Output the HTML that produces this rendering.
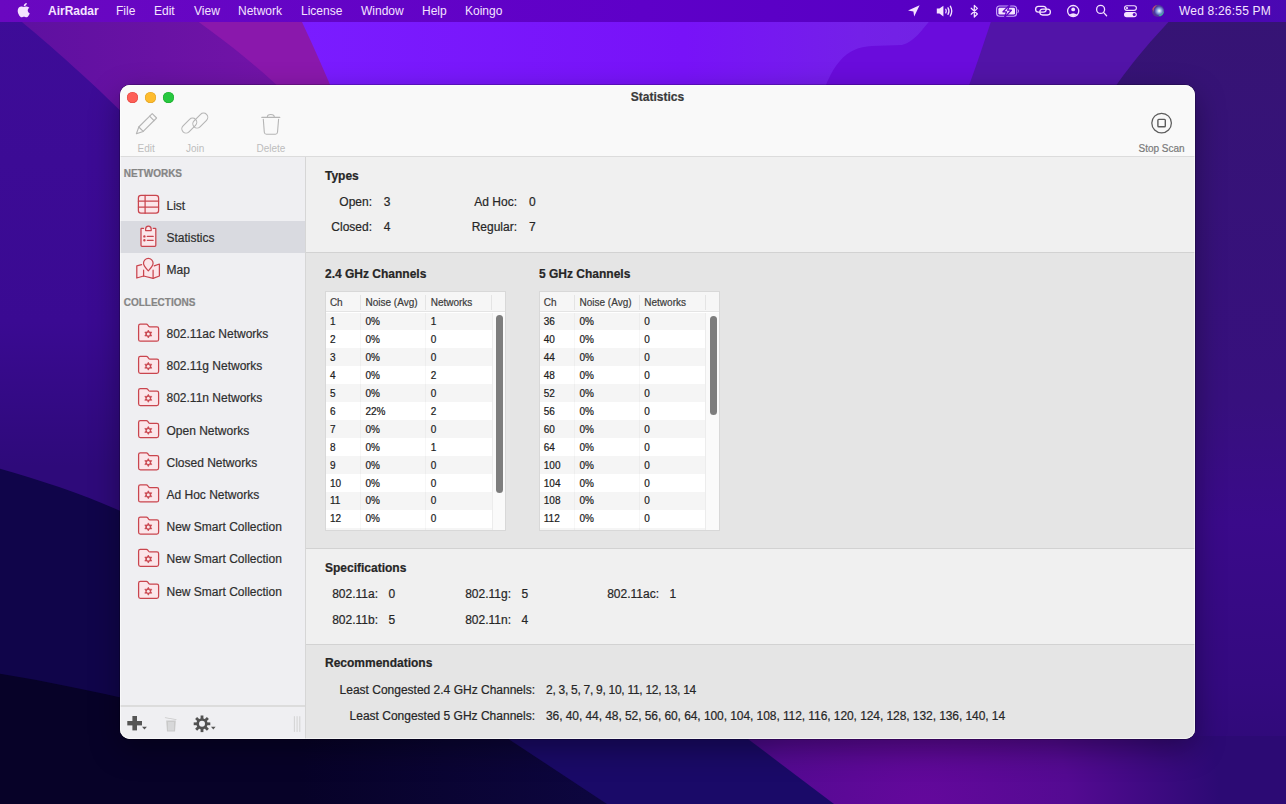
<!DOCTYPE html>
<html><head><meta charset="utf-8">
<style>
*{margin:0;padding:0;box-sizing:border-box}
html,body{width:1286px;height:804px;overflow:hidden;background:#2a0a80;font-family:"Liberation Sans",sans-serif;}
.abs{position:absolute}
#bg{position:absolute;left:0;top:0;width:1286px;height:804px}
#menubar{position:absolute;left:0;top:0;width:1286px;height:22px;background:linear-gradient(to right,#6a08c0 0%,#6404c6 25%,#5e00c8 50%,#5800c4 70%,#5200bc 85%,#4a08b2 100%)}
.mi{position:absolute;top:3.6px;font-size:12px;line-height:14px;color:#f4e4ff;white-space:nowrap}
#win{position:absolute;left:120px;top:85px;width:1075px;height:654px;border-radius:10px;overflow:hidden;background:#f0f0f0;box-shadow:0 0 0 0.5px rgba(0,0,0,0.4),0 10px 30px rgba(0,0,0,0.35)}
#toolbar{position:absolute;left:0;top:0;width:1075px;height:72px;background:#f9f9f9;border-bottom:1px solid #dcdcdc}
#sidebar{position:absolute;left:0;top:72px;width:186px;height:582px;background:#efeff2;border-right:1px solid #d6d6d6}
.t{position:absolute;font-size:12px;line-height:14px;color:#262626;white-space:nowrap;-webkit-text-stroke:0.2px currentColor}
.b{font-weight:bold}
.s10{font-size:10px;line-height:12px}
.sec{position:absolute;left:186px;width:889px}
</style></head><body>
<svg id="bg" width="1286" height="804" viewBox="0 0 1286 804">
 <defs>
  <linearGradient id="gL" x1="0" y1="0" x2="0" y2="804" gradientUnits="userSpaceOnUse"><stop offset="0" stop-color="#3e0c98"/><stop offset="0.4" stop-color="#3a0a92"/><stop offset="0.58" stop-color="#2e0a7a"/></linearGradient>
  <linearGradient id="gM" x1="20" y1="0" x2="300" y2="0" gradientUnits="userSpaceOnUse"><stop offset="0" stop-color="#5e10a0"/><stop offset="1" stop-color="#7414a8"/></linearGradient>
  <linearGradient id="gV" x1="300" y1="0" x2="1000" y2="0" gradientUnits="userSpaceOnUse"><stop offset="0" stop-color="#7a1cff"/><stop offset="0.55" stop-color="#7812f8"/><stop offset="0.8" stop-color="#7420e8"/><stop offset="1" stop-color="#7024e0"/></linearGradient>
  <linearGradient id="gR" x1="0" y1="0" x2="0" y2="804" gradientUnits="userSpaceOnUse"><stop offset="0" stop-color="#361474"/><stop offset="0.5" stop-color="#37107e"/><stop offset="0.65" stop-color="#3a0a8a"/><stop offset="0.85" stop-color="#340a80"/><stop offset="1" stop-color="#2c0a74"/></linearGradient>
  <radialGradient id="gB" cx="920" cy="810" r="300" gradientUnits="userSpaceOnUse"><stop offset="0" stop-color="#64089c"/><stop offset="0.5" stop-color="#540a92"/><stop offset="1" stop-color="#2c0a74"/></radialGradient>
  <linearGradient id="gN" x1="300" y1="0" x2="740" y2="0" gradientUnits="userSpaceOnUse"><stop offset="0" stop-color="#070228"/><stop offset="1" stop-color="#10084a"/></linearGradient>
 </defs>
 <rect width="1286" height="804" fill="url(#gR)"/>
 <!-- left indigo -->
 <rect x="0" y="0" width="140" height="804" fill="url(#gL)"/>
 <!-- magenta wave top-left -->
 <path d="M-5 0 C30 28 75 66 126 116 L420 116 L420 0 Z" fill="url(#gM)"/>
 <path d="M168 0 C205 26 255 62 292 100 L420 100 L420 0 Z" fill="#8a18ac"/>
 <!-- violet -->
 <path d="M292 0 L1000 0 C990 35 975 70 960 110 L340 110 C325 70 310 40 292 0 Z" fill="url(#gV)"/>
 <!-- lighter violet upper -->
 <path d="M818 110 C830 64 846 47 872 46 L902 45 C914 42 922 30 932 18 L944 0 L1000 0 C990 35 975 70 960 110 Z" fill="#6a0cdc"/>
 <!-- medium purple -->
 <path d="M998 0 L1190 0 C1150 40 1125 70 1100 110 L960 110 C975 70 985 40 998 0 Z" fill="#5214a8"/>
 <!-- right lower diagonal -->
 <!-- left lower dark -->
 <path d="M-10 466 C40 480 90 496 140 520 L140 804 L-10 804 Z" fill="#10054a"/>
 <path d="M-10 672 C40 680 90 690 140 702 L140 804 L-10 804 Z" fill="#070228"/>
 <!-- bottom -->
 <path d="M130 736 L1290 736 L1290 810 L130 810 Z" fill="url(#gN)"/>
 <path d="M504 736 L1290 736 L1290 810 L616 810 Z" fill="#1a0a68"/>
 <path d="M744 736 L1290 736 L1290 810 L842 810 Z" fill="url(#gB)"/>
</svg>
<div id="menubar"></div>
<svg class="abs" style="left:0;top:0" width="1286" height="22" viewBox="0 0 1286 22">
 <path transform="translate(17.57 1.98) scale(0.032)" fill="#f4e2ff" d="M318.7 268.7c-.2-36.7 16.4-64.4 50-84.8-18.8-26.9-47.2-41.7-84.7-44.6-35.5-2.8-74.3 20.7-88.5 20.7-15 0-49.4-19.7-76.4-19.7C63.3 141.2 4 184.8 4 273.5q0 39.3 14.4 81.2c12.8 36.7 59 126.7 107.2 125.2 25.2-.6 43-17.9 75.8-17.9 31.8 0 48.3 17.9 76.4 17.9 48.6-.7 90.4-82.5 102.6-119.3-65.2-30.7-61.7-90-61.7-91.9zm-56.6-164.2c27.3-32.4 24.8-61.9 24-72.5-24.1 1.4-52 16.4-67.9 34.9-17.5 19.8-27.8 44.3-25.6 71.9 26.1 2 49.9-11.4 69.5-34.3z"/>
 <path fill="#f4e2ff" d="M919.6 5.2 L908 10.6 L913.4 11.4 L914.2 16.6 Z"/>
 <path fill="#f4e2ff" d="M936.8 8.6 L939.4 8.6 L943.4 5.8 L943.4 16.4 L939.4 13.6 L936.8 13.6 Z"/>
 <g fill="none" stroke="#f4e2ff" stroke-width="1.3" stroke-linecap="round">
  <path d="M945.8 9.3 Q946.8 11.1 945.8 12.9"/>
  <path d="M948 7.8 Q950 11.1 948 14.4"/>
  <path d="M950.3 6.2 Q953.2 11.1 950.3 16"/>
  <path d="M971.2 8.2 L977.4 14 L974.3 17 L974.3 5.4 L977.4 8.4 L971.2 14.2" stroke-width="1.2" stroke-linejoin="round"/>
 </g>
 <rect x="996.6" y="6" width="20" height="10.2" rx="3" fill="none" stroke="#c8a8f8" stroke-width="1.1"/>
 <rect x="998.4" y="7.8" width="16.6" height="6.8" rx="1.4" fill="#f4e2ff"/>
 <path d="M1017.9 9.4 Q1019.2 11.1 1017.9 12.8" fill="none" stroke="#c8a8f8" stroke-width="1"/>
 <path d="M1010 4.6 L1003 11.8 L1006.6 11.8 L1004.4 17.6 L1011.4 10.2 L1007.6 10.2 Z" fill="#f4e2ff" stroke="#5e04c6" stroke-width="1.3" stroke-linejoin="round"/>
 <g fill="none" stroke="#f4e2ff" stroke-width="1.3">
  <rect x="1035.6" y="6.4" width="10.6" height="5.8" rx="2.9"/>
  <rect x="1039.8" y="9.2" width="10.6" height="5.8" rx="2.9"/>
  <circle cx="1073.2" cy="11.1" r="5.6"/>
  <circle cx="1100.6" cy="9.4" r="4"/>
  <path d="M1103.5 12.4 L1106.6 15.8" stroke-linecap="round"/>
  <rect x="1124.6" y="5.8" width="11.8" height="4.6" rx="2.3" stroke-width="1.1"/>
 </g>
 <circle cx="1073.2" cy="9.4" r="1.9" fill="#f4e2ff"/>
 <path d="M1069.2 14.8 Q1073.2 11.6 1077.2 14.8 Q1073.2 17.6 1069.2 14.8 Z" fill="#f4e2ff"/>
 <circle cx="1127" cy="8.1" r="1.1" fill="#f4e2ff"/>
 <rect x="1124" y="12" width="12.8" height="5.2" rx="2.6" fill="#f4e2ff"/>
 <circle cx="1134.2" cy="14.6" r="1.5" fill="#5a06c0"/>
 <defs><radialGradient id="siri" cx="0.6" cy="0.5" r="0.6"><stop offset="0" stop-color="#ffffff"/><stop offset="0.3" stop-color="#90b0e8"/><stop offset="0.65" stop-color="#4a3aa0"/><stop offset="1" stop-color="#5a2a8a"/></radialGradient></defs>
 <circle cx="1158" cy="10.9" r="6.2" fill="url(#siri)"/>
 <path d="M1152.4 9 Q1154 5.5 1157 5.2 Q1153 8 1153.5 12 Z" fill="#e0506a" opacity="0.8"/>
 <path d="M1160 16.5 Q1163.8 15 1164 11 Q1162 14.5 1158.5 15 Z" fill="#40c0a0" opacity="0.8"/>
</svg>

<div class="mi b" style="left:48px">AirRadar</div>
<div class="mi" style="left:116px">File</div>
<div class="mi" style="left:154px">Edit</div>
<div class="mi" style="left:194px">View</div>
<div class="mi" style="left:238px">Network</div>
<div class="mi" style="left:301px">License</div>
<div class="mi" style="left:361px">Window</div>
<div class="mi" style="left:422px">Help</div>
<div class="mi" style="left:465px">Koingo</div>
<div class="mi" style="left:1179px;letter-spacing:0.2px">Wed 8:26:55 PM</div>

<div id="win">
 <div id="toolbar"></div>
 <div id="sidebar"></div>
 <div class="abs" style="left:0;top:620px;width:185px;height:1.5px;background:#dcdcdc"></div>
 <div class="sec" style="top:72px;height:96px;background:#f0f0f0;border-bottom:1px solid #d2d2d2"></div>
 <div class="sec" style="top:168px;height:296px;background:#e5e5e5;border-bottom:1px solid #d2d2d2"></div>
 <div class="sec" style="top:464px;height:96px;background:#f0f0f0;border-bottom:1px solid #d2d2d2"></div>
 <div class="sec" style="top:560px;height:95px;background:#e5e5e5"></div>
 <!-- traffic lights -->
 <div class="abs" style="left:7px;top:6.9px;width:11px;height:11px;border-radius:50%;background:#fe5f57;box-shadow:inset 0 0 0 0.5px #e0443e"></div>
 <div class="abs" style="left:24.9px;top:6.9px;width:11px;height:11px;border-radius:50%;background:#febc2e;box-shadow:inset 0 0 0 0.5px #dea123"></div>
 <div class="abs" style="left:42.5px;top:6.9px;width:11px;height:11px;border-radius:50%;background:#28c840;box-shadow:inset 0 0 0 0.5px #1aab29"></div>
 <div class="t b" style="left:0;width:1075px;text-align:center;top:5px;color:#3a3a3a">Statistics</div>
<div class="t s10" style="left:17.6px;top:57.6px;color:#bdbdbd;-webkit-text-stroke:0">Edit</div>
<div class="t s10" style="left:66.0px;top:57.6px;color:#bdbdbd;-webkit-text-stroke:0">Join</div>
<div class="t s10" style="left:136.5px;top:57.6px;color:#bdbdbd;-webkit-text-stroke:0">Delete</div>
<div class="t s10" style="left:1018.5px;top:57.9px;color:#7a7a7a">Stop Scan</div>
<div class="abs" style="left:0;top:136px;width:185px;height:32px;background:#d9dae0"></div>
<div class="t b s10" style="left:3.7px;top:82.7px;color:#858585">NETWORKS</div>
<div class="t b s10" style="left:3.7px;top:211.5px;color:#858585">COLLECTIONS</div>
<div class="t " style="left:46.5px;top:113.7px;color:#2e2e2e">List</div>
<div class="t " style="left:46.5px;top:145.7px;color:#2e2e2e">Statistics</div>
<div class="t " style="left:46.5px;top:177.7px;color:#2e2e2e">Map</div>
<div class="t " style="left:46.5px;top:242.0px;color:#2e2e2e">802.11ac Networks</div>
<div class="t " style="left:46.5px;top:274.2px;color:#2e2e2e">802.11g Networks</div>
<div class="t " style="left:46.5px;top:306.3px;color:#2e2e2e">802.11n Networks</div>
<div class="t " style="left:46.5px;top:338.5px;color:#2e2e2e">Open Networks</div>
<div class="t " style="left:46.5px;top:370.6px;color:#2e2e2e">Closed Networks</div>
<div class="t " style="left:46.5px;top:402.8px;color:#2e2e2e">Ad Hoc Networks</div>
<div class="t " style="left:46.5px;top:434.9px;color:#2e2e2e">New Smart Collection</div>
<div class="t " style="left:46.5px;top:467.1px;color:#2e2e2e">New Smart Collection</div>
<div class="t " style="left:46.5px;top:500.2px;color:#2e2e2e">New Smart Collection</div>
<div class="t b" style="left:205.0px;top:83.5px;">Types</div>
<div class="t" style="left:52.0px;width:200px;text-align:right;top:109.5px;">Open:</div>
<div class="t " style="left:263.8px;top:109.5px;">3</div>
<div class="t" style="left:52.0px;width:200px;text-align:right;top:135.0px;">Closed:</div>
<div class="t " style="left:263.8px;top:135.0px;">4</div>
<div class="t" style="left:197.0px;width:200px;text-align:right;top:109.5px;">Ad Hoc:</div>
<div class="t " style="left:409.0px;top:109.5px;">0</div>
<div class="t" style="left:197.0px;width:200px;text-align:right;top:135.0px;">Regular:</div>
<div class="t " style="left:409.0px;top:135.0px;">7</div>
<div class="t b" style="left:205.0px;top:181.6px;">2.4 GHz Channels</div>
<div class="t b" style="left:419.0px;top:181.6px;">5 GHz Channels</div>
<div class="t b" style="left:205.0px;top:476.3px;">Specifications</div>
<div class="t" style="left:58.0px;width:200px;text-align:right;top:502.3px;">802.11a:</div>
<div class="t " style="left:268.5px;top:502.3px;">0</div>
<div class="t" style="left:58.0px;width:200px;text-align:right;top:528.3px;">802.11b:</div>
<div class="t " style="left:268.5px;top:528.3px;">5</div>
<div class="t" style="left:191.0px;width:200px;text-align:right;top:502.3px;">802.11g:</div>
<div class="t " style="left:401.5px;top:502.3px;">5</div>
<div class="t" style="left:191.0px;width:200px;text-align:right;top:528.3px;">802.11n:</div>
<div class="t " style="left:401.5px;top:528.3px;">4</div>
<div class="t" style="left:339.0px;width:200px;text-align:right;top:502.3px;">802.11ac:</div>
<div class="t " style="left:549.5px;top:502.3px;">1</div>
<div class="t b" style="left:205.0px;top:571.3px;">Recommendations</div>
<div class="t" style="left:215.0px;width:200px;text-align:right;top:598.0px;">Least Congested 2.4 GHz Channels:</div>
<div class="t " style="left:426.0px;top:598.0px;;letter-spacing:-0.28px">2, 3, 5, 7, 9, 10, 11, 12, 13, 14</div>
<div class="t" style="left:215.0px;width:200px;text-align:right;top:624.0px;">Least Congested 5 GHz Channels:</div>
<div class="t " style="left:426.0px;top:624.0px;letter-spacing:-0.07px">36, 40, 44, 48, 52, 56, 60, 64, 100, 104, 108, 112, 116, 120, 124, 128, 132, 136, 140, 14</div>
<div class="abs" style="left:205.5px;top:206.5px;width:179.5px;height:238px;background:#fff;box-shadow:0 0 0 1px #d8d8d8;overflow:hidden"><div class="abs" style="left:0;top:0;width:179.5px;height:20.5px;background:#f6f6f6;border-bottom:1px solid #e4e4e4"></div><div class="abs" style="left:34.7px;top:3px;width:1px;height:15px;background:#e4e4e4"></div><div class="abs" style="left:99.6px;top:3px;width:1px;height:15px;background:#e4e4e4"></div><div class="abs" style="left:165.9px;top:3px;width:1px;height:15px;background:#e4e4e4"></div><div class="t s10" style="left:4.4px;top:5.3px;color:#3c3c3c">Ch</div><div class="t s10" style="left:40.0px;top:5.3px;color:#3c3c3c">Noise (Avg)</div><div class="t s10" style="left:105.2px;top:5.3px;color:#3c3c3c">Networks</div><div class="abs" style="left:0;top:21.00px;width:166.4px;height:17.94px;background:#f5f5f5"></div><div class="abs" style="left:34.7px;top:21.00px;width:1px;height:17.94px;background:rgba(0,0,0,0.03)"></div><div class="abs" style="left:99.6px;top:21.00px;width:1px;height:17.94px;background:rgba(0,0,0,0.03)"></div><div class="t s10" style="left:4.4px;top:24.5px;color:#202020">1</div><div class="t s10" style="left:40.0px;top:24.5px;color:#202020">0%</div><div class="t s10" style="left:105.2px;top:24.5px;color:#202020">1</div><div class="abs" style="left:0;top:38.94px;width:166.4px;height:17.94px;background:#ffffff"></div><div class="abs" style="left:34.7px;top:38.94px;width:1px;height:17.94px;background:rgba(0,0,0,0.03)"></div><div class="abs" style="left:99.6px;top:38.94px;width:1px;height:17.94px;background:rgba(0,0,0,0.03)"></div><div class="t s10" style="left:4.4px;top:42.5px;color:#202020">2</div><div class="t s10" style="left:40.0px;top:42.5px;color:#202020">0%</div><div class="t s10" style="left:105.2px;top:42.5px;color:#202020">0</div><div class="abs" style="left:0;top:56.88px;width:166.4px;height:17.94px;background:#f5f5f5"></div><div class="abs" style="left:34.7px;top:56.88px;width:1px;height:17.94px;background:rgba(0,0,0,0.03)"></div><div class="abs" style="left:99.6px;top:56.88px;width:1px;height:17.94px;background:rgba(0,0,0,0.03)"></div><div class="t s10" style="left:4.4px;top:60.4px;color:#202020">3</div><div class="t s10" style="left:40.0px;top:60.4px;color:#202020">0%</div><div class="t s10" style="left:105.2px;top:60.4px;color:#202020">0</div><div class="abs" style="left:0;top:74.82px;width:166.4px;height:17.94px;background:#ffffff"></div><div class="abs" style="left:34.7px;top:74.82px;width:1px;height:17.94px;background:rgba(0,0,0,0.03)"></div><div class="abs" style="left:99.6px;top:74.82px;width:1px;height:17.94px;background:rgba(0,0,0,0.03)"></div><div class="t s10" style="left:4.4px;top:78.4px;color:#202020">4</div><div class="t s10" style="left:40.0px;top:78.4px;color:#202020">0%</div><div class="t s10" style="left:105.2px;top:78.4px;color:#202020">2</div><div class="abs" style="left:0;top:92.76px;width:166.4px;height:17.94px;background:#f5f5f5"></div><div class="abs" style="left:34.7px;top:92.76px;width:1px;height:17.94px;background:rgba(0,0,0,0.03)"></div><div class="abs" style="left:99.6px;top:92.76px;width:1px;height:17.94px;background:rgba(0,0,0,0.03)"></div><div class="t s10" style="left:4.4px;top:96.3px;color:#202020">5</div><div class="t s10" style="left:40.0px;top:96.3px;color:#202020">0%</div><div class="t s10" style="left:105.2px;top:96.3px;color:#202020">0</div><div class="abs" style="left:0;top:110.70px;width:166.4px;height:17.94px;background:#ffffff"></div><div class="abs" style="left:34.7px;top:110.70px;width:1px;height:17.94px;background:rgba(0,0,0,0.03)"></div><div class="abs" style="left:99.6px;top:110.70px;width:1px;height:17.94px;background:rgba(0,0,0,0.03)"></div><div class="t s10" style="left:4.4px;top:114.2px;color:#202020">6</div><div class="t s10" style="left:40.0px;top:114.2px;color:#202020">22%</div><div class="t s10" style="left:105.2px;top:114.2px;color:#202020">2</div><div class="abs" style="left:0;top:128.64px;width:166.4px;height:17.94px;background:#f5f5f5"></div><div class="abs" style="left:34.7px;top:128.64px;width:1px;height:17.94px;background:rgba(0,0,0,0.03)"></div><div class="abs" style="left:99.6px;top:128.64px;width:1px;height:17.94px;background:rgba(0,0,0,0.03)"></div><div class="t s10" style="left:4.4px;top:132.2px;color:#202020">7</div><div class="t s10" style="left:40.0px;top:132.2px;color:#202020">0%</div><div class="t s10" style="left:105.2px;top:132.2px;color:#202020">0</div><div class="abs" style="left:0;top:146.58px;width:166.4px;height:17.94px;background:#ffffff"></div><div class="abs" style="left:34.7px;top:146.58px;width:1px;height:17.94px;background:rgba(0,0,0,0.03)"></div><div class="abs" style="left:99.6px;top:146.58px;width:1px;height:17.94px;background:rgba(0,0,0,0.03)"></div><div class="t s10" style="left:4.4px;top:150.1px;color:#202020">8</div><div class="t s10" style="left:40.0px;top:150.1px;color:#202020">0%</div><div class="t s10" style="left:105.2px;top:150.1px;color:#202020">1</div><div class="abs" style="left:0;top:164.52px;width:166.4px;height:17.94px;background:#f5f5f5"></div><div class="abs" style="left:34.7px;top:164.52px;width:1px;height:17.94px;background:rgba(0,0,0,0.03)"></div><div class="abs" style="left:99.6px;top:164.52px;width:1px;height:17.94px;background:rgba(0,0,0,0.03)"></div><div class="t s10" style="left:4.4px;top:168.1px;color:#202020">9</div><div class="t s10" style="left:40.0px;top:168.1px;color:#202020">0%</div><div class="t s10" style="left:105.2px;top:168.1px;color:#202020">0</div><div class="abs" style="left:0;top:182.46px;width:166.4px;height:17.94px;background:#ffffff"></div><div class="abs" style="left:34.7px;top:182.46px;width:1px;height:17.94px;background:rgba(0,0,0,0.03)"></div><div class="abs" style="left:99.6px;top:182.46px;width:1px;height:17.94px;background:rgba(0,0,0,0.03)"></div><div class="t s10" style="left:4.4px;top:186.0px;color:#202020">10</div><div class="t s10" style="left:40.0px;top:186.0px;color:#202020">0%</div><div class="t s10" style="left:105.2px;top:186.0px;color:#202020">0</div><div class="abs" style="left:0;top:200.40px;width:166.4px;height:17.94px;background:#f5f5f5"></div><div class="abs" style="left:34.7px;top:200.40px;width:1px;height:17.94px;background:rgba(0,0,0,0.03)"></div><div class="abs" style="left:99.6px;top:200.40px;width:1px;height:17.94px;background:rgba(0,0,0,0.03)"></div><div class="t s10" style="left:4.4px;top:203.9px;color:#202020">11</div><div class="t s10" style="left:40.0px;top:203.9px;color:#202020">0%</div><div class="t s10" style="left:105.2px;top:203.9px;color:#202020">0</div><div class="abs" style="left:0;top:218.34px;width:166.4px;height:17.94px;background:#ffffff"></div><div class="abs" style="left:34.7px;top:218.34px;width:1px;height:17.94px;background:rgba(0,0,0,0.03)"></div><div class="abs" style="left:99.6px;top:218.34px;width:1px;height:17.94px;background:rgba(0,0,0,0.03)"></div><div class="t s10" style="left:4.4px;top:221.9px;color:#202020">12</div><div class="t s10" style="left:40.0px;top:221.9px;color:#202020">0%</div><div class="t s10" style="left:105.2px;top:221.9px;color:#202020">0</div><div class="abs" style="left:0;top:236.28px;width:166.4px;height:17.94px;background:#f5f5f5"></div><div class="abs" style="left:34.7px;top:236.28px;width:1px;height:17.94px;background:rgba(0,0,0,0.03)"></div><div class="abs" style="left:99.6px;top:236.28px;width:1px;height:17.94px;background:rgba(0,0,0,0.03)"></div><div class="t s10" style="left:4.4px;top:239.8px;color:#202020">13</div><div class="t s10" style="left:40.0px;top:239.8px;color:#202020">0%</div><div class="t s10" style="left:105.2px;top:239.8px;color:#202020">0</div><div class="abs" style="left:166.4px;top:21.0px;width:13.6px;height:220px;background:#fafafa;border-left:1px solid #ececec"></div><div class="abs" style="left:170.5px;top:23.8px;width:7.2px;height:177.7px;border-radius:4px;background:#7d7d7d"></div></div>
<div class="abs" style="left:420.3px;top:206.5px;width:179.2px;height:238px;background:#fff;box-shadow:0 0 0 1px #d8d8d8;overflow:hidden"><div class="abs" style="left:0;top:0;width:179.2px;height:20.5px;background:#f6f6f6;border-bottom:1px solid #e4e4e4"></div><div class="abs" style="left:34.0px;top:3px;width:1px;height:15px;background:#e4e4e4"></div><div class="abs" style="left:98.7px;top:3px;width:1px;height:15px;background:#e4e4e4"></div><div class="abs" style="left:164.7px;top:3px;width:1px;height:15px;background:#e4e4e4"></div><div class="t s10" style="left:3.5px;top:5.3px;color:#3c3c3c">Ch</div><div class="t s10" style="left:39.2px;top:5.3px;color:#3c3c3c">Noise (Avg)</div><div class="t s10" style="left:104.0px;top:5.3px;color:#3c3c3c">Networks</div><div class="abs" style="left:0;top:21.00px;width:165.2px;height:17.94px;background:#f5f5f5"></div><div class="abs" style="left:34.0px;top:21.00px;width:1px;height:17.94px;background:rgba(0,0,0,0.03)"></div><div class="abs" style="left:98.7px;top:21.00px;width:1px;height:17.94px;background:rgba(0,0,0,0.03)"></div><div class="t s10" style="left:3.5px;top:24.5px;color:#202020">36</div><div class="t s10" style="left:39.2px;top:24.5px;color:#202020">0%</div><div class="t s10" style="left:104.0px;top:24.5px;color:#202020">0</div><div class="abs" style="left:0;top:38.94px;width:165.2px;height:17.94px;background:#ffffff"></div><div class="abs" style="left:34.0px;top:38.94px;width:1px;height:17.94px;background:rgba(0,0,0,0.03)"></div><div class="abs" style="left:98.7px;top:38.94px;width:1px;height:17.94px;background:rgba(0,0,0,0.03)"></div><div class="t s10" style="left:3.5px;top:42.5px;color:#202020">40</div><div class="t s10" style="left:39.2px;top:42.5px;color:#202020">0%</div><div class="t s10" style="left:104.0px;top:42.5px;color:#202020">0</div><div class="abs" style="left:0;top:56.88px;width:165.2px;height:17.94px;background:#f5f5f5"></div><div class="abs" style="left:34.0px;top:56.88px;width:1px;height:17.94px;background:rgba(0,0,0,0.03)"></div><div class="abs" style="left:98.7px;top:56.88px;width:1px;height:17.94px;background:rgba(0,0,0,0.03)"></div><div class="t s10" style="left:3.5px;top:60.4px;color:#202020">44</div><div class="t s10" style="left:39.2px;top:60.4px;color:#202020">0%</div><div class="t s10" style="left:104.0px;top:60.4px;color:#202020">0</div><div class="abs" style="left:0;top:74.82px;width:165.2px;height:17.94px;background:#ffffff"></div><div class="abs" style="left:34.0px;top:74.82px;width:1px;height:17.94px;background:rgba(0,0,0,0.03)"></div><div class="abs" style="left:98.7px;top:74.82px;width:1px;height:17.94px;background:rgba(0,0,0,0.03)"></div><div class="t s10" style="left:3.5px;top:78.4px;color:#202020">48</div><div class="t s10" style="left:39.2px;top:78.4px;color:#202020">0%</div><div class="t s10" style="left:104.0px;top:78.4px;color:#202020">0</div><div class="abs" style="left:0;top:92.76px;width:165.2px;height:17.94px;background:#f5f5f5"></div><div class="abs" style="left:34.0px;top:92.76px;width:1px;height:17.94px;background:rgba(0,0,0,0.03)"></div><div class="abs" style="left:98.7px;top:92.76px;width:1px;height:17.94px;background:rgba(0,0,0,0.03)"></div><div class="t s10" style="left:3.5px;top:96.3px;color:#202020">52</div><div class="t s10" style="left:39.2px;top:96.3px;color:#202020">0%</div><div class="t s10" style="left:104.0px;top:96.3px;color:#202020">0</div><div class="abs" style="left:0;top:110.70px;width:165.2px;height:17.94px;background:#ffffff"></div><div class="abs" style="left:34.0px;top:110.70px;width:1px;height:17.94px;background:rgba(0,0,0,0.03)"></div><div class="abs" style="left:98.7px;top:110.70px;width:1px;height:17.94px;background:rgba(0,0,0,0.03)"></div><div class="t s10" style="left:3.5px;top:114.2px;color:#202020">56</div><div class="t s10" style="left:39.2px;top:114.2px;color:#202020">0%</div><div class="t s10" style="left:104.0px;top:114.2px;color:#202020">0</div><div class="abs" style="left:0;top:128.64px;width:165.2px;height:17.94px;background:#f5f5f5"></div><div class="abs" style="left:34.0px;top:128.64px;width:1px;height:17.94px;background:rgba(0,0,0,0.03)"></div><div class="abs" style="left:98.7px;top:128.64px;width:1px;height:17.94px;background:rgba(0,0,0,0.03)"></div><div class="t s10" style="left:3.5px;top:132.2px;color:#202020">60</div><div class="t s10" style="left:39.2px;top:132.2px;color:#202020">0%</div><div class="t s10" style="left:104.0px;top:132.2px;color:#202020">0</div><div class="abs" style="left:0;top:146.58px;width:165.2px;height:17.94px;background:#ffffff"></div><div class="abs" style="left:34.0px;top:146.58px;width:1px;height:17.94px;background:rgba(0,0,0,0.03)"></div><div class="abs" style="left:98.7px;top:146.58px;width:1px;height:17.94px;background:rgba(0,0,0,0.03)"></div><div class="t s10" style="left:3.5px;top:150.1px;color:#202020">64</div><div class="t s10" style="left:39.2px;top:150.1px;color:#202020">0%</div><div class="t s10" style="left:104.0px;top:150.1px;color:#202020">0</div><div class="abs" style="left:0;top:164.52px;width:165.2px;height:17.94px;background:#f5f5f5"></div><div class="abs" style="left:34.0px;top:164.52px;width:1px;height:17.94px;background:rgba(0,0,0,0.03)"></div><div class="abs" style="left:98.7px;top:164.52px;width:1px;height:17.94px;background:rgba(0,0,0,0.03)"></div><div class="t s10" style="left:3.5px;top:168.1px;color:#202020">100</div><div class="t s10" style="left:39.2px;top:168.1px;color:#202020">0%</div><div class="t s10" style="left:104.0px;top:168.1px;color:#202020">0</div><div class="abs" style="left:0;top:182.46px;width:165.2px;height:17.94px;background:#ffffff"></div><div class="abs" style="left:34.0px;top:182.46px;width:1px;height:17.94px;background:rgba(0,0,0,0.03)"></div><div class="abs" style="left:98.7px;top:182.46px;width:1px;height:17.94px;background:rgba(0,0,0,0.03)"></div><div class="t s10" style="left:3.5px;top:186.0px;color:#202020">104</div><div class="t s10" style="left:39.2px;top:186.0px;color:#202020">0%</div><div class="t s10" style="left:104.0px;top:186.0px;color:#202020">0</div><div class="abs" style="left:0;top:200.40px;width:165.2px;height:17.94px;background:#f5f5f5"></div><div class="abs" style="left:34.0px;top:200.40px;width:1px;height:17.94px;background:rgba(0,0,0,0.03)"></div><div class="abs" style="left:98.7px;top:200.40px;width:1px;height:17.94px;background:rgba(0,0,0,0.03)"></div><div class="t s10" style="left:3.5px;top:203.9px;color:#202020">108</div><div class="t s10" style="left:39.2px;top:203.9px;color:#202020">0%</div><div class="t s10" style="left:104.0px;top:203.9px;color:#202020">0</div><div class="abs" style="left:0;top:218.34px;width:165.2px;height:17.94px;background:#ffffff"></div><div class="abs" style="left:34.0px;top:218.34px;width:1px;height:17.94px;background:rgba(0,0,0,0.03)"></div><div class="abs" style="left:98.7px;top:218.34px;width:1px;height:17.94px;background:rgba(0,0,0,0.03)"></div><div class="t s10" style="left:3.5px;top:221.9px;color:#202020">112</div><div class="t s10" style="left:39.2px;top:221.9px;color:#202020">0%</div><div class="t s10" style="left:104.0px;top:221.9px;color:#202020">0</div><div class="abs" style="left:0;top:236.28px;width:165.2px;height:17.94px;background:#f5f5f5"></div><div class="abs" style="left:34.0px;top:236.28px;width:1px;height:17.94px;background:rgba(0,0,0,0.03)"></div><div class="abs" style="left:98.7px;top:236.28px;width:1px;height:17.94px;background:rgba(0,0,0,0.03)"></div><div class="t s10" style="left:3.5px;top:239.8px;color:#202020">116</div><div class="t s10" style="left:39.2px;top:239.8px;color:#202020">0%</div><div class="t s10" style="left:104.0px;top:239.8px;color:#202020">0</div><div class="abs" style="left:165.2px;top:21.0px;width:14.5px;height:220px;background:#fafafa;border-left:1px solid #ececec"></div><div class="abs" style="left:169.9px;top:24.0px;width:6.6px;height:99.2px;border-radius:4px;background:#7d7d7d"></div></div>
</div>
<svg class="abs" style="left:0;top:0" width="1286" height="804" viewBox="0 0 1286 804">
<g fill="none" stroke="#b5b5b5" stroke-width="1.1" stroke-linejoin="round" stroke-linecap="round">
 <!-- pencil -->
 <path d="M152.2 113.6 L156.6 118.0 L143.2 131.4 L136.4 133.8 L138.8 127.0 Z"/>
 <path d="M149.6 116.2 L154.0 120.6"/>
 <path d="M138.8 127.0 L143.2 131.4"/>
 <!-- link -->
 <g transform="translate(189.3 125.6) rotate(-45)"><rect x="-8.8" y="-4.2" width="17.6" height="8.4" rx="4.2"/></g>
 <g transform="translate(200.3 120.6) rotate(-45)"><rect x="-8.8" y="-4.2" width="17.6" height="8.4" rx="4.2"/></g>
 <!-- trash -->
 <path d="M261.8 117.4 L279.8 117.4"/>
 <path d="M267.3 117.2 C267.3 113.6 274.3 113.6 274.3 117.2"/>
 <path d="M263.3 119.2 L264.3 132.3 Q264.5 134.3 266.5 134.3 L275.3 134.3 Q277.3 134.3 277.5 132.3 L278.6 119.2"/>
</g>
<!-- stop scan -->
<circle cx="1161.6" cy="123.1" r="9.8" fill="none" stroke="#5c5c5c" stroke-width="1.25"/>
<rect x="1157.9" y="119.4" width="7.4" height="7.4" rx="0.8" fill="none" stroke="#5c5c5c" stroke-width="1.4"/>
<g fill="#fbe6ea" stroke="#c9454e" stroke-width="1.25" stroke-linejoin="round" stroke-linecap="round">
 <!-- list -->
 <rect x="138.4" y="195.4" width="20.2" height="17.8" rx="2.6"/>
 <path d="M138.4 201.2 H158.6 M138.4 207 H158.6 M145.1 195.4 V213.2" fill="none"/>
 <!-- clipboard -->
 <path d="M143.5 228.4 L141.5 228.4 Q141 228.4 141 229 L141 245.3 Q141 246.3 142 246.3 L154.8 246.3 Q155.8 246.3 155.8 245.3 L155.8 229 Q155.8 228.4 155.3 228.4 L153.3 228.4"/>
 <path d="M145.6 230.6 L145.6 229.3 Q145.6 226.1 148.4 226.1 Q151.2 226.1 151.2 229.3 L151.2 230.6 Z" />
 <path d="M147.3 236.4 H153.2 M147.3 240.3 H153.2" fill="none"/>
 <circle cx="144.4" cy="236.4" r="0.6" fill="#c9454e"/>
 <circle cx="144.4" cy="240.3" r="0.6" fill="#c9454e"/>
 <!-- map -->
 <path d="M141.6 264.6 L136.8 265.8 L136.8 278 L143.6 276 L153.1 278.3 L159.4 276 L159.4 264 L154.2 265.8" />
 <path d="M143.6 270.2 V276 M153.1 270.2 V278.3" fill="none"/>
 <path d="M148.3 270.8 C146.2 268.6 143.5 266 143.5 263.3 A4.8 4.8 0 0 1 153.1 263.3 C153.1 266 150.4 268.6 148.3 270.8 Z"/>
</g>
<g transform="translate(0 0.00)" stroke="#c9454e" stroke-width="1.25" stroke-linejoin="round">
 <path d="M138.6 326 Q138.6 324.2 140.4 324.2 L146.4 324.2 Q147.2 324.2 147.8 325 L148.6 326.2 Q149.1 326.9 150 326.9 L157 326.9 Q158.6 326.9 158.6 328.5 L158.6 339.4 Q158.6 341.2 156.8 341.2 L140.4 341.2 Q138.6 341.2 138.6 339.4 Z" fill="#fbe6ea"/>
 <path d="M148.3 330 L149.5 332 L151.8 332 L150.7 334 L151.8 336 L149.5 336 L148.3 338 L147.1 336 L144.8 336 L145.9 334 L144.8 332 L147.1 332 Z" fill="#c9454e" stroke-width="0.6"/>
 <circle cx="148.3" cy="334" r="1.5" fill="#fbe6ea" stroke="none"/>
</g>
<g transform="translate(0 32.15)" stroke="#c9454e" stroke-width="1.25" stroke-linejoin="round">
 <path d="M138.6 326 Q138.6 324.2 140.4 324.2 L146.4 324.2 Q147.2 324.2 147.8 325 L148.6 326.2 Q149.1 326.9 150 326.9 L157 326.9 Q158.6 326.9 158.6 328.5 L158.6 339.4 Q158.6 341.2 156.8 341.2 L140.4 341.2 Q138.6 341.2 138.6 339.4 Z" fill="#fbe6ea"/>
 <path d="M148.3 330 L149.5 332 L151.8 332 L150.7 334 L151.8 336 L149.5 336 L148.3 338 L147.1 336 L144.8 336 L145.9 334 L144.8 332 L147.1 332 Z" fill="#c9454e" stroke-width="0.6"/>
 <circle cx="148.3" cy="334" r="1.5" fill="#fbe6ea" stroke="none"/>
</g>
<g transform="translate(0 64.30)" stroke="#c9454e" stroke-width="1.25" stroke-linejoin="round">
 <path d="M138.6 326 Q138.6 324.2 140.4 324.2 L146.4 324.2 Q147.2 324.2 147.8 325 L148.6 326.2 Q149.1 326.9 150 326.9 L157 326.9 Q158.6 326.9 158.6 328.5 L158.6 339.4 Q158.6 341.2 156.8 341.2 L140.4 341.2 Q138.6 341.2 138.6 339.4 Z" fill="#fbe6ea"/>
 <path d="M148.3 330 L149.5 332 L151.8 332 L150.7 334 L151.8 336 L149.5 336 L148.3 338 L147.1 336 L144.8 336 L145.9 334 L144.8 332 L147.1 332 Z" fill="#c9454e" stroke-width="0.6"/>
 <circle cx="148.3" cy="334" r="1.5" fill="#fbe6ea" stroke="none"/>
</g>
<g transform="translate(0 96.45)" stroke="#c9454e" stroke-width="1.25" stroke-linejoin="round">
 <path d="M138.6 326 Q138.6 324.2 140.4 324.2 L146.4 324.2 Q147.2 324.2 147.8 325 L148.6 326.2 Q149.1 326.9 150 326.9 L157 326.9 Q158.6 326.9 158.6 328.5 L158.6 339.4 Q158.6 341.2 156.8 341.2 L140.4 341.2 Q138.6 341.2 138.6 339.4 Z" fill="#fbe6ea"/>
 <path d="M148.3 330 L149.5 332 L151.8 332 L150.7 334 L151.8 336 L149.5 336 L148.3 338 L147.1 336 L144.8 336 L145.9 334 L144.8 332 L147.1 332 Z" fill="#c9454e" stroke-width="0.6"/>
 <circle cx="148.3" cy="334" r="1.5" fill="#fbe6ea" stroke="none"/>
</g>
<g transform="translate(0 128.60)" stroke="#c9454e" stroke-width="1.25" stroke-linejoin="round">
 <path d="M138.6 326 Q138.6 324.2 140.4 324.2 L146.4 324.2 Q147.2 324.2 147.8 325 L148.6 326.2 Q149.1 326.9 150 326.9 L157 326.9 Q158.6 326.9 158.6 328.5 L158.6 339.4 Q158.6 341.2 156.8 341.2 L140.4 341.2 Q138.6 341.2 138.6 339.4 Z" fill="#fbe6ea"/>
 <path d="M148.3 330 L149.5 332 L151.8 332 L150.7 334 L151.8 336 L149.5 336 L148.3 338 L147.1 336 L144.8 336 L145.9 334 L144.8 332 L147.1 332 Z" fill="#c9454e" stroke-width="0.6"/>
 <circle cx="148.3" cy="334" r="1.5" fill="#fbe6ea" stroke="none"/>
</g>
<g transform="translate(0 160.75)" stroke="#c9454e" stroke-width="1.25" stroke-linejoin="round">
 <path d="M138.6 326 Q138.6 324.2 140.4 324.2 L146.4 324.2 Q147.2 324.2 147.8 325 L148.6 326.2 Q149.1 326.9 150 326.9 L157 326.9 Q158.6 326.9 158.6 328.5 L158.6 339.4 Q158.6 341.2 156.8 341.2 L140.4 341.2 Q138.6 341.2 138.6 339.4 Z" fill="#fbe6ea"/>
 <path d="M148.3 330 L149.5 332 L151.8 332 L150.7 334 L151.8 336 L149.5 336 L148.3 338 L147.1 336 L144.8 336 L145.9 334 L144.8 332 L147.1 332 Z" fill="#c9454e" stroke-width="0.6"/>
 <circle cx="148.3" cy="334" r="1.5" fill="#fbe6ea" stroke="none"/>
</g>
<g transform="translate(0 192.90)" stroke="#c9454e" stroke-width="1.25" stroke-linejoin="round">
 <path d="M138.6 326 Q138.6 324.2 140.4 324.2 L146.4 324.2 Q147.2 324.2 147.8 325 L148.6 326.2 Q149.1 326.9 150 326.9 L157 326.9 Q158.6 326.9 158.6 328.5 L158.6 339.4 Q158.6 341.2 156.8 341.2 L140.4 341.2 Q138.6 341.2 138.6 339.4 Z" fill="#fbe6ea"/>
 <path d="M148.3 330 L149.5 332 L151.8 332 L150.7 334 L151.8 336 L149.5 336 L148.3 338 L147.1 336 L144.8 336 L145.9 334 L144.8 332 L147.1 332 Z" fill="#c9454e" stroke-width="0.6"/>
 <circle cx="148.3" cy="334" r="1.5" fill="#fbe6ea" stroke="none"/>
</g>
<g transform="translate(0 225.05)" stroke="#c9454e" stroke-width="1.25" stroke-linejoin="round">
 <path d="M138.6 326 Q138.6 324.2 140.4 324.2 L146.4 324.2 Q147.2 324.2 147.8 325 L148.6 326.2 Q149.1 326.9 150 326.9 L157 326.9 Q158.6 326.9 158.6 328.5 L158.6 339.4 Q158.6 341.2 156.8 341.2 L140.4 341.2 Q138.6 341.2 138.6 339.4 Z" fill="#fbe6ea"/>
 <path d="M148.3 330 L149.5 332 L151.8 332 L150.7 334 L151.8 336 L149.5 336 L148.3 338 L147.1 336 L144.8 336 L145.9 334 L144.8 332 L147.1 332 Z" fill="#c9454e" stroke-width="0.6"/>
 <circle cx="148.3" cy="334" r="1.5" fill="#fbe6ea" stroke="none"/>
</g>
<g transform="translate(0 257.20)" stroke="#c9454e" stroke-width="1.25" stroke-linejoin="round">
 <path d="M138.6 326 Q138.6 324.2 140.4 324.2 L146.4 324.2 Q147.2 324.2 147.8 325 L148.6 326.2 Q149.1 326.9 150 326.9 L157 326.9 Q158.6 326.9 158.6 328.5 L158.6 339.4 Q158.6 341.2 156.8 341.2 L140.4 341.2 Q138.6 341.2 138.6 339.4 Z" fill="#fbe6ea"/>
 <path d="M148.3 330 L149.5 332 L151.8 332 L150.7 334 L151.8 336 L149.5 336 L148.3 338 L147.1 336 L144.8 336 L145.9 334 L144.8 332 L147.1 332 Z" fill="#c9454e" stroke-width="0.6"/>
 <circle cx="148.3" cy="334" r="1.5" fill="#fbe6ea" stroke="none"/>
</g>
<g fill="#555">
 <rect x="127.3" y="721" width="14.7" height="4.4"/>
 <rect x="132.4" y="716" width="4.6" height="14.4"/>
 <path d="M142 726.8 L146.9 726.8 L144.45 729.6 Z"/>
 <path d="M211 726.8 L215.6 726.8 L213.3 729.6 Z"/>
</g>
<g fill="#c9c9c9">
 <path d="M165 717.2 L176.5 719.2 L176.3 720 L164.8 718 Z"/>
 <path d="M166.2 720.6 L175.8 720.6 L175 731.6 L167 731.6 Z"/>
</g>
<g stroke="#eeeff3" stroke-width="0.8"><path d="M169 722 V730.5 M171 722 V730.5 M173 722 V730.5"/></g>
<g transform="translate(202 723.8)" fill="#525252">
 <circle r="5.6"/>
 <g id="teeth"><rect x="-1.4" y="-8.3" width="2.8" height="16.6"/></g>
 <use href="#teeth" transform="rotate(45)"/><use href="#teeth" transform="rotate(90)"/><use href="#teeth" transform="rotate(135)"/>
 <circle r="3.0" fill="#eeeff3"/>
</g>
<g stroke="#cfcfcf" stroke-width="0.9"><path d="M294.4 716.2 V731.9 M297.1 716.2 V731.9 M299.8 716.2 V731.9"/></g>
</svg>
<div class="abs" style="left:120px;top:85px;width:1075px;height:654px;border-radius:10px;box-shadow:inset 0 0 0 1px rgba(255,255,255,0.55);pointer-events:none"></div>
</body></html>
